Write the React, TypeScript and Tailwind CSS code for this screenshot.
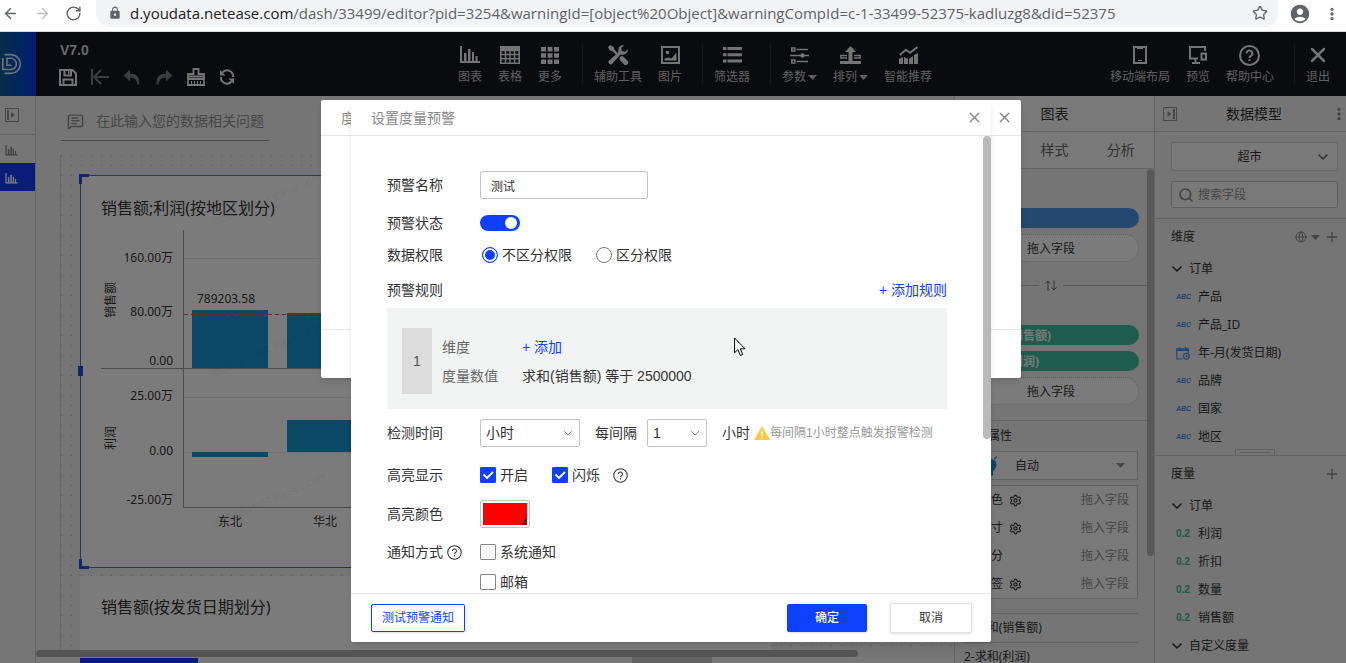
import { useState, type ReactNode } from "react";
import {
  ArrowLeft,
  ArrowRight,
  ChevronDown,
  Globe,
  MessageSquareText,
  MoreVertical,
  Plus,
  RotateCw,
  Search,
  Settings,
  Star,
  X,
} from "lucide-react";
import { MdAccountCircle, MdLock } from "react-icons/md";
import clsx from "clsx";

const dimensions = ["产品", "产品_ID", "年-月(发货日期)", "品牌", "国家", "地区"];
const measures = ["利润", "折扣", "数量", "销售额"];
const marks = [
  { name: "颜色", gear: true },
  { name: "尺寸", gear: true },
  { name: "细分", gear: false },
  { name: "标签", gear: true },
];

function BarsIcon({ className }: { className?: string }) {
  return (
    <svg viewBox="0 0 20 18" className={className} fill="currentColor">
      <path d="M0 0h2v15h18v2H0zM4 7h2.500v8H4zM8 3h2.500v12H8zM12 6h2v9h-2zM15.500 10h2v5h-2z" />
    </svg>
  );
}

function SaveIcon() {
  return (
    <svg viewBox="0 0 18 17" className="h-[17px] w-[18px]" fill="none" stroke="currentColor" strokeWidth="2">
      <path d="M1 1h12.500L17 4.500V16H1z" />
      <path d="M5.500 1v5.500h6.500V1M4.500 16v-5.500h9V16" />
      <path d="M9 2h1.500v3H9z" fill="currentColor" stroke="none" />
    </svg>
  );
}

function UndoIcon({ flip }: { flip?: boolean }) {
  return (
    <svg
      viewBox="0 0 18 16"
      className={clsx("h-4 w-[18px] text-[#7a7a7a]", flip && "-scale-x-100")}
      fill="currentColor"
    >
      <path d="M.5 6.500 7 .8v4c6.500 0 10 3.200 9.300 10.700h-2C14 10.800 12 8.500 7 8.500v3.700z" />
    </svg>
  );
}

function TableIcon() {
  return (
    <svg viewBox="0 0 20 18" className="h-[18px] w-5" fill="none" stroke="currentColor" strokeWidth="1.500">
      <path d="M.8 .8h18.400v16.400H.8z" strokeWidth="1.600" />
      <path d="M1 1h18v3.500H1z" fill="currentColor" />
      <path d="M1 8.500h18M1 12.800h18M5.500 4v13M10 4v13M14.500 4v13" />
    </svg>
  );
}

function GridIcon() {
  return (
    <svg viewBox="0 0 18 17" className="h-[17px] w-[18px]" fill="currentColor">
      <path d="M0 0h5v4.500H0zM6.500 0h5v4.500h-5zM13 0h5v4.500h-5zM0 6.200h5v4.500H0zM6.500 6.200h5v4.500h-5zM13 6.200h5v4.500h-5zM0 12.400h5V17H0zM6.500 12.400h5V17h-5zM13 12.400h5V17h-5z" />
    </svg>
  );
}

function ToolsIcon() {
  return (
    <svg viewBox="0 0 24 24" className="size-[22px]" fill="currentColor">
      <path d="M1 3.500 3.500 1l4 2.500.5 2.500 4.500 4.500-2 2L6 8l-2.500-.5zM14 14.500l1.500-1.500 1.800.3 5 5a2.600 2.600 0 0 1-3.900 3.900l-4.800-4.900z" />
      <path d="M22.800 5.500a6 6 0 0 1-8 6L5.500 21.800a2.500 2.500 0 0 1-3.500-3.500L12.500 9a6 6 0 0 1 6-8l-3 3.500.8 3.200 3.200.8z" />
    </svg>
  );
}

function PictureIcon() {
  return (
    <svg viewBox="0 0 19 18" className="h-[18px] w-[19px]" fill="none" stroke="currentColor" strokeWidth="2">
      <path d="M1 1h17v16H1z" />
      <path d="M3.500 14.500v-2l4-1 3 1 5-6v8z" fill="currentColor" stroke="none" />
      <path d="M5 5h3v3H5z" fill="currentColor" stroke="none" />
    </svg>
  );
}

function ListIcon() {
  return (
    <svg viewBox="0 0 19 16" className="h-4 w-[19px]" fill="currentColor">
      <path d="M0 0h3.500v3H0zM4.500 0H19v3H4.500zM0 6.200h3.500v3H0zM4.500 6.200H19v3H4.500zM0 12.500h3.500v3H0zM4.500 12.500H19v3H4.500z" />
    </svg>
  );
}

function SlidersIcon() {
  return (
    <svg viewBox="0 0 19 17" className="h-[17px] w-[19px]" fill="none" stroke="currentColor" strokeWidth="1.600">
      <path d="M1.800 1h3v3h-3zM1.800 13h3v3h-3zM6.500 2.500H18M6.500 14.500H18M0 8.500h19" />
      <circle cx="12.500" cy="8.500" r="2.200" fill="currentColor" stroke="none" />
    </svg>
  );
}

function ArrangeIcon() {
  return (
    <svg viewBox="0 0 21 18" className="h-[18px] w-[21px]" fill="currentColor">
      <path d="M10.500 0 16 6h-3.500v10h-4V6H5zM0 15h21v3H0z" />
      <path d="M7 9.500H.8v2.500H7M14 9.500h6.200v2.500H14" fill="none" stroke="currentColor" strokeWidth="1.400" />
    </svg>
  );
}

function TrendIcon() {
  return (
    <svg viewBox="0 0 19 18" className="h-[18px] w-[19px]" fill="currentColor">
      <path d="M0 13l4-2v7H0zM5 11l4 2v5H5zM10 13l4-3v8h-4zM15 9l4-2v11h-4z" />
      <path d="M.8 9 7 3.800l4 3L18.500 1" fill="none" stroke="currentColor" strokeWidth="2" />
    </svg>
  );
}

function PhoneIcon() {
  return (
    <svg viewBox="0 0 14 18" className="h-[18px] w-3.5" fill="none" stroke="currentColor" strokeWidth="2">
      <path d="M1 1h12v16H1z" />
      <path d="M5 14.500h4M4 2.500h6" strokeWidth="1.200" />
    </svg>
  );
}

function PreviewIcon() {
  return (
    <svg viewBox="0 0 18 18" className="size-[18px]" fill="none" stroke="currentColor" strokeWidth="2">
      <path d="M16 5V1H1v11.500h8M6.500 12.500V17M3 17h8M12.500 7.500H17v6h-4.500z" />
    </svg>
  );
}

function HelpIcon({ className, thin }: { className?: string; thin?: boolean }) {
  return (
    <svg
      viewBox="0 0 20 20"
      className={className}
      fill="none"
      stroke="currentColor"
      strokeWidth={thin ? 1.4 : 2}
    >
      <circle cx="10" cy="10" r="9" />
      <path d="M7.300 8a2.700 2.700 0 1 1 4 2.300c-.9.600-1.300 1-1.300 2M10 13.600v1.700" />
    </svg>
  );
}

function PaintIcon() {
  return (
    <svg viewBox="0 0 18 18" className="size-[18px]" fill="none" stroke="currentColor" strokeWidth="1.800">
      <path d="M1 8.500V6h5.500V1h5v5H17v2.500zM1 8.500V17h16V8.500M1 11h16" />
      <path d="M4.500 13v3M7.500 13v3M10.500 13v3M13.500 13v3" strokeWidth="1.200" />
    </svg>
  );
}

function SyncIcon() {
  return (
    <svg viewBox="0 0 16 16" className="size-4" fill="none" stroke="currentColor" strokeWidth="2">
      <path d="M3.500 3.500A6 6 0 0 1 14 8M12.500 12.500A6 6 0 0 1 2 8" />
      <path d="M1 1v5.500h5.500zM15 15V9.500H9.500z" fill="currentColor" stroke="none" />
    </svg>
  );
}

function PanelIcon({ right }: { right?: boolean }) {
  return (
    <svg viewBox="0 0 14 14" className="size-3.5 text-[#909090]" fill="none" stroke="currentColor">
      <path d="M.5 .5h13v13H.5z" />
      <path
        d={right ? "M10 2h2v10h-2zM4.500 4l4 3-4 3z" : "M2 2h2v10H2zM6 4l4 3-4 3z"}
        fill="currentColor"
        stroke="none"
      />
    </svg>
  );
}

function Caret({ className }: { className?: string }) {
  return (
    <svg viewBox="0 0 9 5" className={clsx("h-[5px] w-[9px]", className)} fill="currentColor">
      <path d="M0 0h9L4.500 5z" />
    </svg>
  );
}

function CalendarIcon() {
  return (
    <svg viewBox="0 0 14 13" className="h-[13px] w-3.5 text-[#4b8ee0]" fill="none" stroke="currentColor" strokeWidth="1.200">
      <path d="M6.500 12H.8V2h11.400v4M3.500 0v3M9.500 0v3" />
      <path d="M1 2h11v1.500H1z" fill="currentColor" />
      <circle cx="10.300" cy="9.300" r="2.900" />
      <path d="M10.300 7.800v1.700h1.500" />
    </svg>
  );
}

function Tool({ icon, label, caret }: { icon: ReactNode; label: string; caret?: boolean }) {
  return (
    <button type="button" className="flex flex-col items-center px-2 pt-0.5 text-xs text-[#c0c0c0]">
      <span className="flex h-6 items-center text-[#e8e8e8]">{icon}</span>
      <span className="flex h-5 items-center gap-0.5 whitespace-nowrap leading-5">
        {label}
        {caret && <Caret />}
      </span>
    </button>
  );
}

function Divider() {
  return <div className="mr-[3px] ml-3 h-10 w-px bg-[#2b2e36]" />;
}

function AddressBar() {
  return (
    <div className="flex h-8 shrink-0 items-start border-b border-[#d8dadc] bg-white text-[#5f6368]">
      <div className="flex h-[27px] w-24 shrink-0 items-center justify-between pr-[14px] pl-[2px]">
        <ArrowLeft className="size-[17px]" />
        <ArrowRight className="size-[17px] text-[#bdbfc1]" />
        <RotateCw className="size-[17px]" />
      </div>
      <div className="flex h-[27px] min-w-0 flex-1 items-center rounded-b-[14px] bg-[#f1f3f4] pr-2.5 pb-0.5 pl-3 font-['Open_Sans',sans-serif] text-[15px]">
        <MdLock className="mr-2 size-3.5 shrink-0" />
        <div className="min-w-0 flex-1 truncate leading-6">
          <span className="text-[#202124]">d.youdata.netease.com</span>
          /dash/33499/editor?pid=3254&amp;warningId=[object%20Object]&amp;warningCompId=c-1-33499-52375-kadluzg8&amp;did=52375
        </div>
        <Star className="size-4 shrink-0" />
      </div>
      <div className="flex h-[27px] w-[68px] shrink-0 items-center justify-between pr-1.5 pl-[11px]">
        <MdAccountCircle className="size-[22px]" />
        <MoreVertical className="size-4" strokeWidth={3} />
      </div>
    </div>
  );
}

function TopBar() {
  return (
    <header className="flex h-16 shrink-0 bg-[#14161e] pr-2">
      <div className="flex w-9 items-center bg-linear-to-r from-[#15588f] to-[#0a38e8]">
        <svg viewBox="0 0 22 22" className="size-[22px] text-[#dce4f8]" fill="none" stroke="currentColor" strokeWidth="1.600">
          <path d="M2.800 5v11.500h8a5.600 5.600 0 0 0 0-11.200H7v7h4.500" />
          <path d="M4.500 1.600H11a9.400 9.400 0 0 1 0 18.800H4.500" />
        </svg>
      </div>
      <div className="flex flex-1 flex-col pt-2 pl-4">
        <div className="h-5 pl-2 font-['Liberation_Sans',sans-serif] text-sm leading-5 font-bold text-[#d0d0d0]">
          V7.0
        </div>
        <div className="flex h-8 items-center gap-3.5 pt-0.5 pl-[7px] text-[#e8e8e8]">
          <SaveIcon />
          <svg viewBox="0 0 18 16" className="h-4 w-[18px] text-[#7a7a7a]" fill="none" stroke="currentColor" strokeWidth="2">
            <path d="M1 0v16M18 8H3M10 1 3 8l7 7" />
          </svg>
          <UndoIcon />
          <UndoIcon flip />
          <PaintIcon />
          <SyncIcon />
        </div>
      </div>
      <nav className="flex items-center">
        <Tool icon={<BarsIcon className="h-[18px] w-5" />} label="图表" />
        <Tool icon={<TableIcon />} label="表格" />
        <Tool icon={<GridIcon />} label="更多" />
        <Divider />
        <Tool icon={<ToolsIcon />} label="辅助工具" />
        <Tool icon={<PictureIcon />} label="图片" />
        <Divider />
        <Tool icon={<ListIcon />} label="筛选器" />
        <Divider />
        <Tool icon={<SlidersIcon />} label="参数" caret />
        <Tool icon={<ArrangeIcon />} label="排列" caret />
        <Tool icon={<TrendIcon />} label="智能推荐" />
      </nav>
      <div className="flex flex-1 items-center justify-end">
        <Tool icon={<PhoneIcon />} label="移动端布局" />
        <Tool icon={<PreviewIcon />} label="预览" />
        <Tool icon={<HelpIcon className="size-[21px]" />} label="帮助中心" />
        <Divider />
        <Tool icon={<X className="size-6" strokeWidth={2.5} />} label="退出" />
      </div>
    </header>
  );
}

function PageRail() {
  return (
    <aside className="flex w-9 shrink-0 flex-col border-r border-[#c8c8c8] bg-[#ededed]">
      <button type="button" aria-label="展开" className="flex h-[39px] items-center border-b border-[#c8c8c8] pl-[5px]">
        <PanelIcon />
      </button>
      <button type="button" aria-label="页面 1" className="flex h-7 items-center pt-0.5 pl-[5px] text-[#808080]">
        <BarsIcon className="h-[11px] w-[13px]" />
      </button>
      <button type="button" aria-label="页面 2" className="flex h-7 items-center bg-[#1138f0] pt-0.5 pl-[5px] text-white">
        <BarsIcon className="h-[11px] w-[13px]" />
      </button>
    </aside>
  );
}

function RegionChart() {
  const ticks = [
    { y: 86, text: "160.00万" },
    { y: 140, text: "80.00万" },
    { y: 189, text: "0.00" },
    { y: 224, text: "25.00万" },
    { y: 279, text: "0.00" },
    { y: 328, text: "-25.00万" },
  ];
  const watermarks = [50, 200, 351];
  return (
    <svg width="690" height="390" className="block max-w-full text-xs" fill="#333">
      {[82, 221, 276].map((y) => (
        <path key={y} d={`M103 ${y}.5H690`} stroke="#e2e2e2" />
      ))}
      <path d="M111 134h76v58h-76zM206 137h76v55h-76zM111 276h76v5h-76zM206 244h76v32h-76z" fill="#1692cc" />
      <path d="M102.500 54v277.500H690M20 192.500h670" fill="none" stroke="#999" />
      <path d="M103 138.500h587" stroke="#d05050" strokeDasharray="4 3" />
      {ticks.map((t) => (
        <text key={t.y} x="92" y={t.y} textAnchor="end">
          {t.text}
        </text>
      ))}
      <text x="145" y="127" textAnchor="middle">789203.58</text>
      <text x="149" y="350" textAnchor="middle">东北</text>
      <text x="244" y="350" textAnchor="middle">华北</text>
      <text transform="translate(34 124) rotate(-90)" textAnchor="middle">销售额</text>
      <text transform="translate(34 262) rotate(-90)" textAnchor="middle">利润</text>
      {watermarks.map((y) => (
        <text
          key={y}
          transform={`translate(133 ${y}) rotate(-23)`}
          fillOpacity="0.08"
          className="font-['Liberation_Mono',monospace]"
        >
          @corp.netease.com
        </text>
      ))}
    </svg>
  );
}

function Canvas() {
  return (
    <main className="flex min-w-0 flex-1 flex-col overflow-hidden bg-[#ebebeb]">
      <div className="flex h-[45px] w-[233px] shrink-0 flex-col pl-[25px]">
        <label className="flex h-full items-center gap-3 border-b border-[#999] pt-1.5 pl-1.5 text-[#8c8c8c]">
          <MessageSquareText className="size-[17px] shrink-0" />
          <input
            aria-label="数据问题"
            placeholder="在此输入您的数据相关问题"
            className="w-full bg-transparent text-sm outline-none placeholder:text-[#8c8c8c]"
          />
        </label>
      </div>
      <div className="mt-3.5 ml-6 flex min-h-0 flex-1 flex-col overflow-hidden border-l border-[#d0d0d0] bg-[radial-gradient(circle_at_0_0,#b8b8b8_1px,transparent_1px)] bg-size-[10px_10px] pt-5 pl-[19px]">
        <section className="relative mb-2 h-[393px] w-[691px] shrink-0 border border-[#5068d8] bg-[#f7f7f7]">
          <h2 className="h-0 pt-5 pl-5 text-base leading-6 font-normal text-[#333]">
            销售额;利润(按地区划分)
          </h2>
          <div className="-mt-5">
            <RegionChart />
          </div>
          <span className="absolute -top-0.5 -left-0.5 size-2.5 border-t-3 border-l-3 border-[#2c48e0]" />
          <span className="absolute top-[190px] -left-[3px] h-2.5 w-[5px] bg-[#2c48e0]" />
          <span className="absolute -bottom-0.5 -left-0.5 size-2.5 border-b-3 border-l-3 border-[#2c48e0]" />
        </section>
        <section className="h-[300px] w-[691px] shrink-0 bg-[#f7f7f7] pt-[19px] pl-[21px]">
          <h2 className="text-base leading-6 font-normal text-[#333]">销售额(按发货日期划分)</h2>
        </section>
      </div>
      <div className="h-[7px] w-[822px] max-w-full shrink-0 rounded-full bg-[#a8a8a8]" />
      <div className="flex h-[6px] shrink-0 bg-[#f0f0f0] pl-11">
        <div className="mt-px w-[118px] bg-[#1138f0]" />
        <div className="ml-[434px] w-20 bg-[#c8c8c8]" />
      </div>
    </main>
  );
}

function DropZone() {
  return (
    <div className="flex h-7 items-center justify-center rounded-full border border-dotted border-[#bbb] bg-[#f7f7f7] pt-0.5 text-[#333]">
      拖入字段
    </div>
  );
}

function ChartPanel() {
  return (
    <aside className="flex w-[200px] shrink-0 flex-col border-l border-[#c8c8c8] bg-[#ebebeb] text-xs text-[#333]">
      <h3 className="flex h-9 shrink-0 items-center justify-center border-b border-[#c8c8c8] bg-[#f2f2f2] text-sm font-normal">
        图表
      </h3>
      <div className="grid h-[37px] shrink-0 grid-cols-3 border-b border-[#c8c8c8] bg-[#f2f2f2] text-sm text-[#666]">
        <button type="button">数据</button>
        <button type="button">样式</button>
        <button type="button">分析</button>
      </div>
      <div className="flex min-h-0 flex-1">
        <div className="flex min-w-0 flex-1 flex-col overflow-hidden">
          <div className="flex flex-col gap-1.5 px-2 pt-[39px]">
            <div className="h-5 rounded-full bg-[#4a90e2]" />
            <DropZone />
          </div>
          <div className="flex h-[46px] shrink-0 items-center gap-1.5 text-[#666]">
            <span className="h-px flex-1 bg-[#b8b8b8]" />
            <svg viewBox="0 0 12 11" className="h-[11px] w-3" fill="none" stroke="currentColor">
              <path d="M3 11V1M.5 3.500 3 1l2.500 2.500M9 0v10M6.500 7.500 9 10l2.500-2.500" />
            </svg>
            <span className="h-px w-21 bg-[#b8b8b8]" />
          </div>
          <div className="flex flex-col gap-1.5 px-2 pt-[17px] pb-[15px] font-bold text-[#f0f0f0]">
            <div className="flex h-5 items-center rounded-full bg-[#3cb99c] pt-px pl-5">求和(销售额)</div>
            <div className="flex h-5 items-center rounded-full bg-[#3cb99c] pt-px pl-5">求和(利润)</div>
            <div className="font-normal">
              <DropZone />
            </div>
          </div>
          <div className="flex shrink-0 flex-col border-t border-[#c8c8c8] px-[9px]">
            <h4 className="flex h-[30px] items-center">图形属性</h4>
            <button type="button" className="flex h-[29px] items-center border border-[#c8c8c8] bg-[#f2f2f2] pr-3 text-[#333]">
              <svg viewBox="0 0 18 20" className="ml-4 h-5 w-[18px]">
                <path
                  d="M9 3c4 0 6.500 2.500 6.500 5.500 0 3-2 5-3.500 7v4H7.500v-4C5 12 3 10.500 3 8s2.500-5 6-5zM12.500 3l3-3 .8.8-2.500 3z"
                  fill="#1e86d8"
                />
              </svg>
              <span className="ml-4 flex-1 text-left">自动</span>
              <Caret className="text-[#8c8c8c]" />
            </button>
            <ul className="mt-[5px] flex flex-col border border-[#c8c8c8] bg-[#f2f2f2] pr-2 pl-3.5">
              {marks.map((m) => (
                <li key={m.name} className="flex h-7 items-center">
                  <span>{m.name}</span>
                  {m.gear && <Settings className="ml-1.5 size-[13px]" strokeWidth={2} />}
                  <span className="ml-auto text-[#8c8c8c]">拖入字段</span>
                </li>
              ))}
            </ul>
            <div className="mt-3.5 flex h-[29px] items-center border-t border-[#c8c8c8]">1-求和(销售额)</div>
            <div className="flex h-[29px] items-center border-t border-[#c8c8c8]">2-求和(利润)</div>
          </div>
        </div>
        <div className="h-[387px] w-[7px] rounded-full bg-[#b0b0b0]" />
      </div>
    </aside>
  );
}

function Folder({ name }: { name: string }) {
  return (
    <div className="flex h-7 items-center gap-1">
      <ChevronDown className="-ml-0.5 size-4" strokeWidth={2.5} />
      {name}
    </div>
  );
}

function DataPanel() {
  return (
    <aside className="flex w-48 shrink-0 flex-col overflow-hidden border-l border-[#c8c8c8] bg-[#ebebeb] text-xs text-[#333]">
      <div className="flex h-9 shrink-0 items-center border-b border-[#c8c8c8] pl-2">
        <PanelIcon right />
        <h3 className="flex-1 text-center text-sm font-normal">数据模型</h3>
        <MoreVertical className="-mr-px size-4 text-[#888]" strokeWidth={3} />
      </div>
      <div className="flex shrink-0 flex-col gap-2.5 border-b border-[#c8c8c8] pt-2.5 pr-2 pb-2.5 pl-4">
        <button type="button" className="flex h-[29px] items-center rounded-xs border border-[#d0d0d0] bg-[#f2f2f2] pr-1.5">
          <span className="flex-1 pl-3 text-center">超市</span>
          <ChevronDown className="size-4 text-[#555]" />
        </button>
        <label className="flex h-[27px] items-center gap-1 rounded-xs border border-[#c0c0c0] bg-[#f2f2f2] pl-1.5">
          <Search className="size-4 shrink-0 text-[#888]" strokeWidth={2.5} />
          <input
            aria-label="搜索字段"
            placeholder="搜索字段"
            className="w-full bg-transparent outline-none placeholder:text-[#8c8c8c]"
          />
        </label>
      </div>
      <div className="flex shrink-0 flex-col pr-1.5 pl-4">
        <div className="flex h-9 items-center">
          <h4 className="flex-1">维度</h4>
          <Globe className="size-3 text-[#888]" />
          <Caret className="ml-1 text-[#888]" />
          <Plus className="ml-1 size-4 text-[#888]" />
        </div>
        <Folder name="订单" />
        {dimensions.map((d) => (
          <div key={d} className="flex h-7 items-center pl-[5px]">
            <span className="flex w-[22px] items-center font-['Liberation_Sans',sans-serif] text-[7px] font-bold text-[#4b8ee0] italic">
              {d.startsWith("年") ? <CalendarIcon /> : "ABC"}
            </span>
            {d}
          </div>
        ))}
      </div>
      <div className="-mt-0.5 flex shrink-0 justify-center border-b border-[#c8c8c8] pl-2">
        <div className="h-1.5 w-10 border border-b-0 border-[#c0c0c0] px-1 pt-0.5">
          <div className="h-px bg-[#c0c0c0]" />
        </div>
      </div>
      <div className="flex flex-col pr-1.5 pl-4">
        <div className="flex h-9 shrink-0 items-center">
          <h4 className="flex-1">度量</h4>
          <Plus className="size-4 text-[#888]" />
        </div>
        <Folder name="订单" />
        {measures.map((m) => (
          <div key={m} className="flex h-7 items-center pl-[5px]">
            <span className="w-[22px] font-['Liberation_Sans',sans-serif] text-[10px] font-bold text-[#3cb99c]">
              0.2
            </span>
            {m}
          </div>
        ))}
        <Folder name="自定义度量" />
      </div>
    </aside>
  );
}

function Field({ label, id, className, children }: { label: ReactNode; id?: string; className?: string; children: ReactNode }) {
  return (
    <div className={clsx("flex items-center", className)}>
      <label htmlFor={id} className="flex w-[93px] shrink-0 items-center gap-1">
        {label}
      </label>
      {children}
    </div>
  );
}

function Check({ label, defaultChecked }: { label: string; defaultChecked?: boolean }) {
  return (
    <label className="flex items-center gap-1">
      <span className="grid size-4">
        <input
          type="checkbox"
          defaultChecked={defaultChecked}
          className="peer col-start-1 row-start-1 size-4 appearance-none rounded-[1px] border border-[#888] bg-white checked:border-[#1040ff] checked:bg-[#1040ff]"
        />
        <svg
          viewBox="0 0 16 16"
          className="pointer-events-none invisible col-start-1 row-start-1 size-4 peer-checked:visible"
          fill="none"
          stroke="white"
          strokeWidth="1.800"
        >
          <path d="m3.500 7.500 3.500 3.500 6-6" />
        </svg>
      </span>
      {label}
    </label>
  );
}

function Radio({ label, defaultChecked }: { label: string; defaultChecked?: boolean }) {
  return (
    <label className="flex items-center gap-1">
      <input
        type="radio"
        name="scope"
        defaultChecked={defaultChecked}
        className="size-4 appearance-none rounded-full border border-[#777] bg-white checked:border-[#1040ff] checked:bg-[#1040ff] checked:shadow-[inset_0_0_0_2px_white]"
      />
      {label}
    </label>
  );
}

function Picker({ id, label, options, className }: { id: string; label: string; options: string[]; className: string }) {
  return (
    <div className={clsx("relative", className)}>
      <select
        id={id}
        aria-label={label}
        className="h-7 w-full appearance-none rounded-xs border border-[#c4c4c4] bg-white pl-[5px] outline-none"
      >
        {options.map((o) => (
          <option key={o}>{o}</option>
        ))}
      </select>
      <ChevronDown
        className="pointer-events-none absolute top-1.5 right-1 size-4 text-[#999]"
        strokeWidth={1.5}
      />
    </div>
  );
}

function MeasureDialog() {
  return (
    <div className="col-start-1 row-start-1 flex h-[278px] w-[700px] flex-col rounded-xs bg-white shadow-md">
      <div className="flex h-9 items-center justify-between border-b border-[#e8e8e8] pr-2 pl-5 text-[#888]">
        <span>度</span>
        <button type="button" aria-label="关闭度量预警">
          <X className="size-[17px]" strokeWidth={2} />
        </button>
      </div>
      <div className="flex-1" />
      <div className="h-[49px] border-t border-[#e8e8e8]" />
    </div>
  );
}

function AlertDialog() {
  const [name, setName] = useState("测试");

  return (
    <div
      role="dialog"
      aria-label="设置度量预警"
      className="relative col-start-1 row-start-1 flex h-[542px] w-[640px] flex-col rounded-xs bg-white shadow-md"
    >
      <div className="flex h-9 shrink-0 items-center justify-between border-b border-[#e8e8e8] pr-2 pl-5 text-[#888]">
        <h1>设置度量预警</h1>
        <button type="button" aria-label="关闭">
          <X className="size-[17px]" strokeWidth={2} />
        </button>
      </div>

      <div className="flex min-h-0 flex-1">
        <form className="flex min-w-0 flex-1 flex-col overflow-hidden pt-[35px] pr-9 pl-9">
          <Field label="预警名称" id="name" className="mb-2 h-7 shrink-0">
            <input
              id="name"
              value={name}
              onChange={(e) => setName(e.target.value)}
              className="h-7 w-[168px] rounded-xs border border-[#c4c4c4] px-2.5 text-xs outline-none"
            />
          </Field>
          <Field label="预警状态" id="status" className="h-8 shrink-0">
            <input
              id="status"
              type="checkbox"
              role="switch"
              defaultChecked
              className="flex h-4 w-10 appearance-none items-center rounded-full bg-[#bbb] px-[3px] before:size-3 before:rounded-full before:bg-white checked:justify-end checked:bg-[#1040ff]"
            />
          </Field>
          <Field label="数据权限" className="h-8 shrink-0">
            <div className="flex gap-6 pl-0.5">
              <Radio label="不区分权限" defaultChecked />
              <Radio label="区分权限" />
            </div>
          </Field>
          <div className="flex h-[37px] w-[560px] shrink-0 items-center justify-between pt-px">
            <span>预警规则</span>
            <button type="button" className="text-[#1040ff]">+ 添加规则</button>
          </div>
          <div className="flex h-[101px] w-[560px] shrink-0 items-center bg-[#f2f4f4] pt-1 pl-[15px]">
            <div className="flex h-[66px] w-[30px] items-center justify-center bg-[#dcdcdc] text-[#555]">1</div>
            <dl className="ml-2.5 grid grid-cols-[80px_auto] pt-0.5 leading-[29px]">
              <dt className="text-[#666]">维度</dt>
              <dd>
                <button type="button" className="text-[#1040ff]">+ 添加</button>
              </dd>
              <dt className="text-[#666]">度量数值</dt>
              <dd>求和(销售额) 等于 2500000</dd>
            </dl>
          </div>
          <Field label="检测时间" id="unit" className="mt-2.5 h-7 shrink-0">
            <Picker id="unit" label="检测时间" options={["小时", "天"]} className="w-[100px]" />
            <label htmlFor="every" className="mr-2.5 ml-[15px]">每间隔</label>
            <Picker id="every" label="每间隔" options={["1", "2", "3"]} className="w-[60px]" />
            <span className="ml-[15px]">小时</span>
            <svg viewBox="0 0 16 14" className="ml-1 h-3.5 w-4">
              <path d="M8 0l8 14H0z" fill="#fcc843" />
              <path d="M8 4.500v5M8 11v1.500" stroke="white" strokeWidth="1.600" />
            </svg>
            <span className="text-xs text-[#999]">每间隔1小时整点触发报警检测</span>
          </Field>
          <Field label="高亮显示" className="mt-3.5 h-7 shrink-0">
            <div className="flex items-center gap-6">
              <Check label="开启" defaultChecked />
              <Check label="闪烁" defaultChecked />
            </div>
            <HelpIcon thin className="ml-[13px] size-[15px]" />
          </Field>
          <Field label="高亮颜色" className="mt-[11px] h-7 shrink-0">
            <button
              type="button"
              aria-label="高亮颜色"
              className="h-7 w-[50px] rounded-xs border border-[#c4c4c4] bg-white p-0.5"
            >
              <span className="flex h-full items-end justify-end bg-[#ff0000]">
                <svg viewBox="0 0 8 8" className="size-2">
                  <path d="M8 0v8H0z" fill="#900" />
                </svg>
              </span>
            </button>
          </Field>
          <Field
            label={
              <>
                通知方式
                <HelpIcon thin className="size-[15px]" />
              </>
            }
            className="mt-2.5 h-7 shrink-0"
          >
            <Check label="系统通知" />
          </Field>
          <div className="mt-0.5 flex h-7 shrink-0 items-center pl-[93px]">
            <Check label="邮箱" />
          </div>
        </form>
        <div className="h-[303px] w-2 rounded-full bg-[#b9b9b9]" />
      </div>

      <div className="flex h-[49px] shrink-0 items-center border-t border-[#e8e8e8] pr-[19px] pl-5 text-xs">
        <button type="button" className="h-7 rounded-xs border border-[#1040ff] px-2.5 text-[#1040ff] shadow-sm">
          测试预警通知
        </button>
        <button type="button" className="ml-auto h-7 w-20 rounded-xs bg-[#1040ff] font-medium text-white shadow-sm">
          确定
        </button>
        <button type="button" className="ml-[23px] h-[30px] w-[82px] rounded-xs border border-[#e0e0e0] bg-white shadow-sm">
          取消
        </button>
      </div>

      <svg viewBox="0 0 12 20" className="absolute top-[237px] left-[383px] h-5 w-3">
        <path d="M.6 1v14.800l3.300-3.200 2.400 5.900 2.400-1-2.400-5.700h4.700z" fill="white" stroke="black" />
      </svg>
    </div>
  );
}

export default function App() {
  return (
    <div className="flex h-screen flex-col overflow-hidden font-['Liberation_Sans','Noto_Sans_CJK_SC',sans-serif] text-[#333]">
      <AddressBar />
      <div className="relative flex min-h-0 flex-1 flex-col font-['Noto_Sans','Noto_Sans_CJK_SC',sans-serif]">
        <TopBar />
        <div className="flex min-h-0 flex-1">
          <PageRail />
          <Canvas />
          <ChartPanel />
          <DataPanel />
        </div>
        <div className="absolute inset-0 grid items-start justify-center justify-items-center overflow-hidden bg-black/50 pt-17 pr-1 font-['Liberation_Sans','Noto_Sans_CJK_SC',sans-serif] text-sm">
          <MeasureDialog />
          <AlertDialog />
        </div>
      </div>
    </div>
  );
}
